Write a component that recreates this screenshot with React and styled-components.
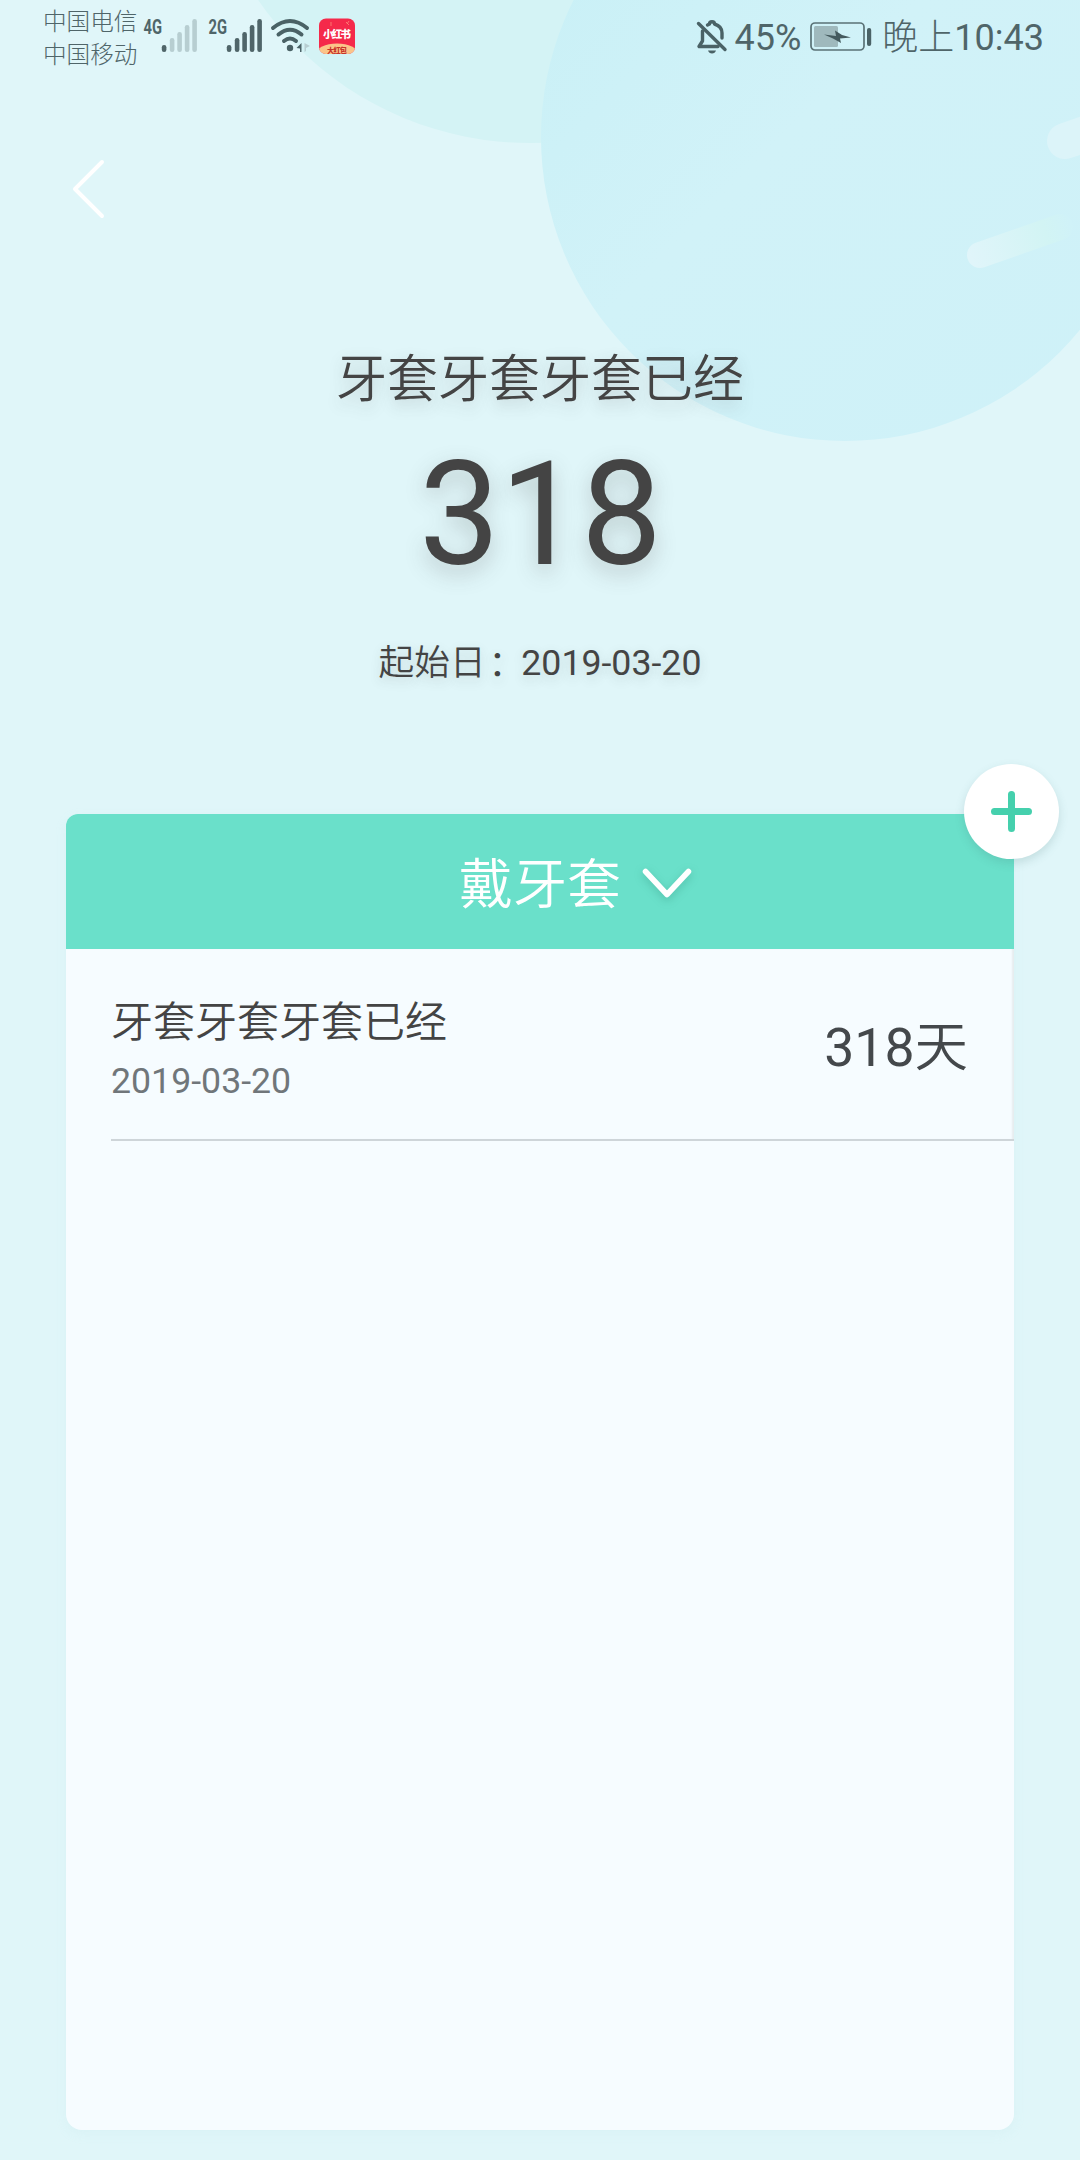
import React from "react";
import styled, { createGlobalStyle } from "styled-components";

const Global = createGlobalStyle`
  * { box-sizing: border-box; }
  body { margin: 0; background: #e0f6f9; font-family: Roboto, "Noto Sans CJK SC", sans-serif; }
`;

const Screen = styled.main`
  position: relative;
  isolation: isolate;
  width: 1080px;
  height: 2160px;
  overflow: hidden;
  display: flex;
  flex-direction: column;
  background: #e0f6f9;
  color: #444;
`;

const Backdrop = styled.svg`
  position: absolute;
  z-index: -1;
  top: 0;
  left: 0;
`;

const StatusBar = styled.header`
  display: flex;
  justify-content: space-between;
  height: 74px;
  padding: 0 36px 0 43px;
  color: #4f6569;
`;

const StatusGroup = styled.div`
  display: flex;
  align-items: center;
`;

const Carriers = styled.div`
  display: flex;
  flex-direction: column;
  width: 100px;
  padding-top: 3px;
  font-size: 23.6px;
  font-weight: 300;
  line-height: 33px;
  white-space: nowrap;
`;

const Signal = styled.svg`
  width: 56px;
  height: 74px;
  margin-right: ${(p) => p.$gap || 0}px;
`;

const StatusText = styled.span`
  padding-top: 2px;
  font-size: 36px;
  font-weight: 400;
  line-height: 74px;
  margin: 0 ${(p) => p.$right || 0}px 0 ${(p) => p.$left || 0}px;
  white-space: nowrap;
`;

const Badge = styled.svg`
  width: 36px;
  height: 74px;
  margin-left: 7px;
`;

const NavBar = styled.nav`
  height: 230px;
  padding: 84px 0 0 68px;
`;

const BackButton = styled.button`
  display: block;
  border: 0;
  padding: 0;
  background: none;
`;

const Hero = styled.section`
  display: flex;
  flex-direction: column;
  align-items: center;
  height: 510px;
  padding-top: 39px;
`;

const HeroTitle = styled.h1`
  margin: 0;
  font-size: 51px;
  font-weight: 350;
  line-height: 74px;
  text-shadow: 0 6px 16px rgba(68, 68, 68, 0.22);
`;

const HeroCount = styled.div`
  margin: 13px 0 0 1px;
  font-size: 144px;
  line-height: 170px;
  text-shadow: 0 8px 22px rgba(68, 68, 68, 0.26);
`;

const HeroDate = styled.div`
  margin-top: 36px;
  font-size: 35.7px;
  line-height: 54px;
  white-space: nowrap;
  text-shadow: 0 4px 12px rgba(68, 68, 68, 0.18);
`;

const Light = styled.span`
  font-weight: ${(p) => p.$weight || 350};
`;

const Colon = styled.span`
  margin: 0 -3px 0 3px;
  vertical-align: -1px;
`;

const Card = styled.section`
  position: relative;
  width: 948px;
  height: 1316px;
  margin-left: 66px;
  border-radius: 12px 0 16px 16px;
  background: #f6fcff;
  box-shadow: 0 4px 12px rgba(170, 225, 225, 0.12);
`;

const CardHeader = styled.div`
  display: flex;
  align-items: center;
  height: 135px;
  padding: 8px 0 0 393px;
  gap: 20px;
  border-radius: 12px 0 0 0;
  background: #6ae0ca;
  color: #fff;
`;

const CategoryName = styled.h2`
  margin: 0;
  font-size: 54px;
  font-weight: 350;
  line-height: 80px;
`;

const Chevron = styled.svg`
  filter: drop-shadow(0 3px 4px rgba(30, 120, 100, 0.3));
`;

const AddButton = styled.button`
  position: absolute;
  top: -50px;
  right: -45px;
  display: grid;
  place-items: center;
  width: 95px;
  height: 95px;
  padding: 0;
  border: 0;
  border-radius: 50%;
  background: #fff;
  box-shadow: 0 4px 10px rgba(60, 110, 110, 0.18);
`;

const EventRow = styled.div`
  display: flex;
  justify-content: space-between;
  height: 192px;
  margin-left: 45px;
  padding-right: 46px;
  border-bottom: 2px solid #ced5d9;
  box-shadow: inset -3px 0 2px -1px #e6edef;
`;

const EventInfo = styled.div`
  display: flex;
  flex-direction: column;
  padding-top: 43px;
`;

const EventName = styled.div`
  font-size: 42px;
  font-weight: 350;
  line-height: 62px;
`;

const EventDate = styled.div`
  margin-top: 4px;
  font-size: 35.7px;
  font-weight: 400;
  line-height: 46px;
  color: #70767a;
`;

const EventDays = styled.div`
  padding-top: 59px;
  font-size: 53.5px;
  font-weight: 400;
  line-height: 80px;
  color: #44484b;
`;

const SIGNAL_BARS = [
  { x: 21, top: 45 },
  { x: 29, top: 38 },
  { x: 36.5, top: 32 },
  { x: 44, top: 25 },
  { x: 51.5, top: 19 },
];

function SignalIcon({ label, level, gap }) {
  return (
    <Signal viewBox="0 0 56 74" $gap={gap}>
      <text x="0.500" y="33.500" fontSize="20.500" fontWeight="700" textLength="18.500" lengthAdjust="spacingAndGlyphs" fill="#4f6569">{label}</text>
      {SIGNAL_BARS.map((b, i) => (
        <rect key={b.x} x={b.x - 2.2} y={b.top} width="4.6" height={52 - b.top} rx="2.2" fill={i < level ? "#4f6569" : "#b7ced1"} />
      ))}
    </Signal>
  );
}

function WifiIcon() {
  return (
    <svg width="42" height="74" viewBox="0 0 42 74" fill="none" stroke="#4a6266" strokeWidth="4" strokeLinecap="round">
      <path d="M3 28Q20 14 37 28M8.5 34.5Q20 25 31.5 34.5M14 41Q20 36 26 41" />
      <circle cx="20" cy="48" r="3.2" fill="#4a6266" stroke="none" />
      <path d="M26.500 48l5-5v9h-1.500v-3.500z" fill="#4a6266" stroke="none" />
      <path d="M34.500 43v9l1.500-1v-3l4-2z" fill="#b7ced1" stroke="none" />
    </svg>
  );
}

function AppBadge() {
  return (
    <Badge viewBox="0 0 36 74">
      <defs><clipPath id="badge"><rect y="18.500" width="36" height="35.500" rx="7" /></clipPath></defs>
      <g clipPath="url(#badge)">
        <rect y="18" width="36" height="36" fill="#f5294a" />
        <ellipse cx="18" cy="54" rx="21" ry="10.500" fill="#fbc489" />
        <path d="M12 22v4M27 22l3 3M30 21l-2 3" stroke="#fb8b78" strokeWidth="0.800" />
      </g>
      <text x="18" y="37.500" textAnchor="middle" fontSize="10.5" fontWeight="900" textLength="28" fill="#fff">小红书</text>
      <text x="18" y="52.5" textAnchor="middle" fontSize="7.2" fontWeight="900" textLength="20" fill="#c8342a">大红包</text>
    </Badge>
  );
}

function MutedBellIcon() {
  return (
    <svg width="32" height="74" viewBox="0 0 32 74" fill="none" stroke="#4a6266" strokeWidth="3.4" strokeLinecap="round" strokeLinejoin="round">
      <path d="M2.5 23.5L29 49.5" />
      <path d="M6.500 31v10l-3.500 5.500h19M11.500 25l2-1c0-3 5-3 5 0c5 1.500 7.500 4.500 7.500 9v5" />
      <path d="M12 50.500h8q-1 3-4 3t-4-3z" fill="#4a6266" stroke="none" />
    </svg>
  );
}

function BatteryIcon() {
  return (
    <svg width="64" height="74" viewBox="0 0 64 74">
      <rect x="2" y="23" width="53" height="27" rx="4" fill="none" stroke="#5a7276" strokeWidth="1.700" />
      <rect x="5" y="26" width="24" height="21" rx="1.500" fill="#9fb9bd" />
      <path d="M15 34.500l12 1.500-1-5.500 7 4.500 9 2.500-11 1 1 4.500-8-4.500z" fill="#445a5e" />
      <rect x="58" y="28" width="4.200" height="18" rx="2" fill="#4a6266" />
    </svg>
  );
}

export default function App() {
  return (
    <Screen>
      <Global />
      <Backdrop width="1080" height="460" viewBox="0 0 1080 460">
        <defs>
          <linearGradient id="sky" x1="0" y1="0" x2="1" y2="1">
            <stop offset="0.100" stopColor="#c9f0f6" />
            <stop offset="0.450" stopColor="#d1f2f8" />
            <stop offset="1" stopColor="#cef1f8" />
          </linearGradient>
          <linearGradient id="streak" gradientUnits="userSpaceOnUse" x1="970" y1="255" x2="1070" y2="222">
            <stop offset="0" stopColor="#e0f5fa" />
            <stop offset="0.750" stopColor="#d2f4f4" />
            <stop offset="1" stopColor="#d0f2f8" />
          </linearGradient>
        </defs>
        <circle cx="530" cy="-187" r="330" fill="#d4f3f5" />
        <circle cx="845" cy="137" r="304" fill="url(#sky)" />
        <path d="M980 255L1060 227" stroke="url(#streak)" strokeWidth="26" strokeLinecap="round" />
        <path d="M1065 141L1100 129" stroke="#dcf4f9" strokeWidth="36" strokeLinecap="round" />
      </Backdrop>

      <StatusBar>
        <StatusGroup>
          <Carriers><span>中国电信</span><span>中国移动</span></Carriers>
          <SignalIcon label="4G" level={1} gap={9} />
          <SignalIcon label="2G" level={5} gap={6} />
          <WifiIcon />
          <AppBadge />
        </StatusGroup>
        <StatusGroup>
          <MutedBellIcon />
          <StatusText $left={6} $right={8}>45%</StatusText>
          <BatteryIcon />
          <StatusText $left={9}><Light $weight={300}>晚上</Light>10:43</StatusText>
        </StatusGroup>
      </StatusBar>

      <NavBar>
        <BackButton aria-label="返回">
          <svg width="40" height="62" viewBox="0 0 40 62" fill="none" stroke="#fff" strokeWidth="4" strokeLinecap="round" strokeLinejoin="round">
            <path d="M34 4L7 31l27 27" />
          </svg>
        </BackButton>
      </NavBar>

      <Hero>
        <HeroTitle>牙套牙套牙套已经</HeroTitle>
        <HeroCount>318</HeroCount>
        <HeroDate><Light>起始日</Light><Colon>：</Colon>2019-03-20</HeroDate>
      </Hero>

      <Card>
        <CardHeader>
          <CategoryName>戴牙套</CategoryName>
          <Chevron width="54" height="44" viewBox="0 0 54 44" fill="none" stroke="#fff" strokeWidth="5.500" strokeLinecap="round" strokeLinejoin="round">
            <path d="M4.500 7.500l21.500 23L47.500 7.500" />
          </Chevron>
        </CardHeader>
        <EventRow>
          <EventInfo>
            <EventName>牙套牙套牙套已经</EventName>
            <EventDate>2019-03-20</EventDate>
          </EventInfo>
          <EventDays>318<Light>天</Light></EventDays>
        </EventRow>
        <AddButton aria-label="添加">
          <svg width="44" height="44" viewBox="0 0 44 44" stroke="#45d0ad" strokeWidth="7" strokeLinecap="round">
            <path d="M21.500 4.500v34M4.500 21.500h34" />
          </svg>
        </AddButton>
      </Card>
    </Screen>
  );
}
